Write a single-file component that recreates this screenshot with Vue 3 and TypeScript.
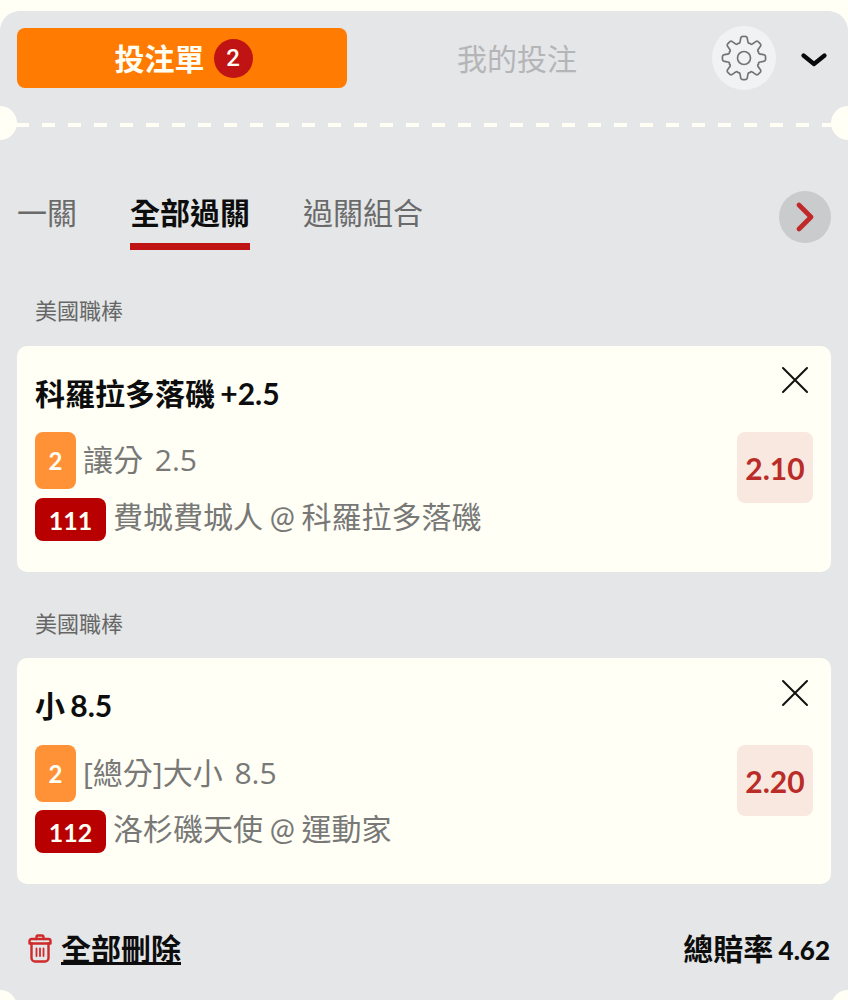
<script setup lang="ts">
interface Bet { id: number; title: string; market: string; code: string; match: string; odds: string }
const bets: Bet[] = [
  { id: 1, title: '科羅拉多落磯 +2.5', market: '讓分 2.5', code: '111', match: '費城費城人 @ 科羅拉多落磯', odds: '2.10' },
  { id: 2, title: '小 8.5', market: '[總分]大小 8.5', code: '112', match: '洛杉磯天使 @ 運動家', odds: '2.20' },
]

function polar(r: number, deg: number): string {
  const a = ((deg - 90) * Math.PI) / 180
  return `${(23 + r * Math.cos(a)).toFixed(2)} ${(23 + r * Math.sin(a)).toFixed(2)}`
}
const outer = 21.5
const inner = 15.8
let gearPath = `M${polar(inner, -22.5)}`
for (let i = 0; i < 8; i++) {
  const a = i * 45
  gearPath += ` C${polar(inner - 1.2, a - 15)} ${polar(outer - 5, a - 14)} ${polar(outer - 1, a - 9)}`
  gearPath += ` Q${polar(outer + 0.6, a - 7)} ${polar(outer, a)}`
  gearPath += ` Q${polar(outer + 0.6, a + 7)} ${polar(outer - 1, a + 9)}`
  gearPath += ` C${polar(outer - 5, a + 14)} ${polar(inner - 1.2, a + 15)} ${polar(inner, a + 22.5)}`
}
gearPath += ' Z'
</script>

<template>
  <div class="page">
    <div class="sheet">
      <header class="head">
        <div class="slip-tab"><span class="slip-label">投注單</span><span class="count">2</span></div>
        <div class="my-tab">我的投注</div>
        <div class="gear">
          <svg width="46" height="46" viewBox="0 0 46 46" fill="none" stroke="#747474" stroke-width="1.700" stroke-linejoin="round">
            <path :d="gearPath" />
            <circle cx="23" cy="23" r="6.5" />
          </svg>
        </div>
        <svg class="chev" width="26" height="16" viewBox="0 0 26 16" fill="none" stroke="#0a0a0a" stroke-width="4.2" stroke-linecap="round" stroke-linejoin="round">
          <path d="M2.500 3.500 13 12 23.500 3.500" />
        </svg>
      </header>

      <div class="perforation"><i class="notch left"></i><i class="notch right"></i></div>

      <nav class="tabs">
        <span class="tab">一關</span>
        <span class="tab active">全部過關</span>
        <span class="tab">過關組合</span>
        <button class="next" type="button" aria-label="next">
          <svg width="20" height="30" viewBox="0 0 20 30" fill="none" stroke="#c0282a" stroke-width="4.600" stroke-linecap="round" stroke-linejoin="round">
            <path d="M4 3 16 15 4 27" />
          </svg>
        </button>
      </nav>

      <section v-for="bet in bets" :key="bet.id" class="group">
        <div class="league">美國職棒</div>
        <article class="card">
          <div class="info">
            <div class="title">{{ bet.title }}</div>
            <div class="market"><span class="badge-orange">2</span><span class="market-text">{{ bet.market }}</span></div>
            <div class="match"><span class="badge-red">{{ bet.code }}</span><span class="match-text">{{ bet.match }}</span></div>
          </div>
          <div class="side">
            <svg class="close" width="28" height="28" viewBox="0 0 28 28" stroke="#111" stroke-width="2" stroke-linecap="round">
              <path d="M2 2 26 26M26 2 2 26" />
            </svg>
            <div class="odds">{{ bet.odds }}</div>
          </div>
        </article>
      </section>

      <footer class="foot">
        <div class="clear">
          <svg width="24" height="29" viewBox="0 0 24 29" fill="none" stroke="#cf2a2a" stroke-width="2.400" stroke-linejoin="round" stroke-linecap="round">
            <path d="M8.500 5V3a1.500 1.500 0 0 1 1.500-1.500h4A1.500 1.500 0 0 1 15.500 3v2" />
            <path d="M1.500 9.500V7a2 2 0 0 1 2-2h17a2 2 0 0 1 2 2v2.500z" />
            <path d="M3.500 9.500V24a3.500 3.500 0 0 0 3.500 3.500h10a3.500 3.500 0 0 0 3.500-3.500V9.500" />
            <path d="M8.500 14.500v7.500M12 14.500v7.500M15.500 14.500v7.500" stroke-width="1.800" />
          </svg>
          <span class="clear-text">全部刪除</span>
        </div>
        <div class="total">總賠率 <b>4.62</b></div>
      </footer>

      <i class="notch bottom-left"></i>
      <i class="notch bottom-right"></i>
    </div>
  </div>
</template>

<style scoped>
.page {
  width: 848px;
  height: 1000px;
  background: #fffff6;
  padding-top: 11px;
  box-sizing: border-box;
  overflow: hidden;
  font-family: Lato, "Noto Sans CJK TC", sans-serif;
}
.sheet {
  height: 989px;
  background: #e4e6e8;
  border-radius: 20px 20px 0 0;
  position: relative;
  overflow: hidden;
}
.head {
  display: flex;
  align-items: center;
  height: 94px;
  padding: 0 17px;
}
.slip-tab {
  width: 330px;
  height: 60px;
  background: #ff7b02;
  border-radius: 8px;
  color: #fffff6;
  font-size: 30px;
  font-weight: 700;
  display: flex;
  align-items: center;
  justify-content: center;
  gap: 9px;
  padding-left: 3px;
  box-sizing: border-box;
}
.slip-label { padding-bottom: 2px; }
.count {
  width: 39px;
  height: 39px;
  border-radius: 50%;
  background: #c01414;
  font-family: Roboto, sans-serif;
  font-size: 24px;
  font-weight: 500;
  display: flex;
  align-items: center;
  justify-content: center;
}
.my-tab {
  width: 340px;
  text-align: center;
  color: #b4b5b7;
  font-size: 30px;
  padding-bottom: 3px;
}
.gear {
  width: 64px;
  height: 64px;
  margin-left: 25px;
  flex: none;
  border-radius: 50%;
  background: #f1f2f3;
  display: flex;
  align-items: center;
  justify-content: center;
}
.chev {
  flex: none;
  margin-left: 25px;
  margin-top: 4px;
}
.perforation {
  position: relative;
  height: 4px;
  margin: 18px 0 0;
  background: repeating-linear-gradient(to right, #fffff6 0 13px, transparent 13px 26px) 16px 0 no-repeat;
}
.notch {
  position: absolute;
  width: 34px;
  height: 34px;
  border-radius: 50%;
  background: #fffff6;
}
.notch.left { left: -17px; top: -17px; }
.notch.right { right: -17px; top: -17px; }
.notch.bottom-left { left: -17px; top: 979px; }
.notch.bottom-right { right: -17px; top: 979px; }
.tabs {
  display: flex;
  align-items: center;
  height: 62px;
  margin-top: 61px;
  padding: 0 17px;
}
.tab {
  color: #6a6a6a;
  font-size: 30px;
  line-height: 48px;
  height: 62px;
  box-sizing: border-box;
  margin-right: 53px;
}
.tab.active {
  color: #0d0d0d;
  font-weight: 700;
  border-bottom: 7px solid #c01414;
}
.next {
  margin-left: auto;
  margin-top: -4px;
  width: 52px;
  height: 52px;
  border: 0;
  padding: 0;
  border-radius: 50%;
  background: #c9cbcd;
  display: flex;
  align-items: center;
  justify-content: center;
}
.group { padding: 0 17px; }
.league {
  color: #666;
  font-size: 22px;
  line-height: 32px;
  padding: 0 18px;
  margin-top: 45px;
  margin-bottom: 19px;
}
.group + .group .league { margin-top: 36px; margin-bottom: 18px; }
.card {
  height: 226px;
  background: #fffff6;
  border-radius: 10px;
  display: flex;
  justify-content: space-between;
  padding: 0 18px;
  box-sizing: border-box;
}
.info { padding-top: 26px; }
.title {
  color: #0d0d0d;
  font-size: 30px;
  font-weight: 700;
  line-height: 42px;
  word-spacing: -2px;
}
.market, .match {
  display: flex;
  align-items: center;
  gap: 7px;
  color: #787876;
  font-size: 30px;
}
.market { margin-top: 18px; height: 57px; }
.match { margin-top: 9px; height: 43px; }
.group + .group .market { margin-top: 19px; }
.group + .group .match { margin-top: 8px; }
.group + .group .side { padding-top: 1px; }
.market-text {
  padding-bottom: 2px;
  font-family: "Open Sans", "Noto Sans CJK TC", sans-serif;
  line-height: 1.2;
  word-spacing: 4px;
}
.match-text { padding-bottom: 10px; word-spacing: -1px; }
.badge-orange {
  width: 41px;
  height: 57px;
  border-radius: 8px;
  background: #ff9236;
  color: #fffff6;
  font-size: 24px;
  font-weight: 700;
  display: flex;
  align-items: center;
  justify-content: center;
}
.badge-red {
  width: 71px;
  height: 43px;
  border-radius: 8px;
  background: #b80000;
  color: #fffff6;
  font-size: 25px;
  font-weight: 700;
  display: flex;
  align-items: center;
  justify-content: center;
}
.side {
  display: flex;
  flex-direction: column;
  align-items: flex-end;
}
.close { margin-top: 20px; margin-right: 4px; }
.odds {
  width: 76px;
  height: 71px;
  margin-top: 38px;
  border-radius: 8px;
  background: #f9e8df;
  color: #b92c28;
  font-size: 30px;
  font-weight: 700;
  display: flex;
  align-items: center;
  justify-content: center;
}
.foot {
  display: flex;
  justify-content: space-between;
  align-items: center;
  padding: 0 18px 0 28px;
  margin-top: 41px;
  height: 46px;
}
.clear {
  display: flex;
  align-items: center;
  gap: 9px;
  color: #0d0d0d;
  font-size: 30px;
  font-weight: 700;
}
.clear-text { text-decoration: underline; padding-bottom: 2px; }
.total {
  color: #0d0d0d;
  font-size: 30px;
  font-weight: 700;
  word-spacing: -2px;
  padding-bottom: 2px;
}
.total b { font-size: 26px; }
</style>

<style>
html, body { margin: 0; background: #fffff6; }
</style>
